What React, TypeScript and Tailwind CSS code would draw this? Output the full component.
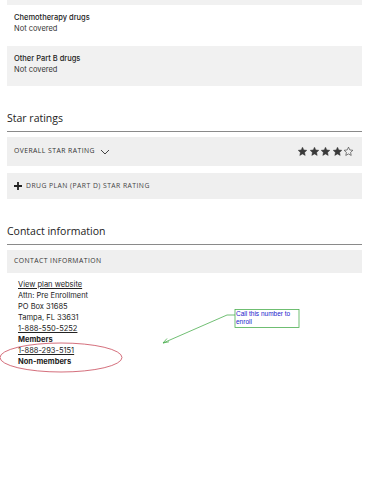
import React from 'react';

const heading = { fontFamily: '"Open Sans", "Liberation Sans", sans-serif' };
const body = { fontFamily: 'Inter, "Liberation Sans", sans-serif' };

function Star({ filled }: { filled: boolean }) {
    return (
        <svg width="11" height="11" viewBox="0 0 24 24">
            <path
                d="M12 2.5l2.9 6.1 6.6.8-4.9 4.6 1.3 6.6L12 17.3l-5.9 3.3 1.3-6.6-4.9-4.6 6.6-.8z"
                fill={filled ? '#3a3a3a' : 'none'}
                stroke="#3a3a3a"
                strokeWidth={filled ? 1 : 1.4}
                strokeLinejoin="round"
            />
        </svg>
    );
}

function Coverage({ title, gray }: { title: string; gray?: boolean }) {
    return (
        <div className={`px-[7px] pt-[7px] pb-[11px] ${gray ? 'bg-[#f1f1f1]' : ''}`} style={body}>
            <p className="text-[7.5px] font-medium text-[#222] leading-[11px]">{title}</p>
            <p className="text-[7.5px] text-[#333] leading-[11px]">Not covered</p>
        </div>
    );
}

export default function App() {
    return (
        <div className="relative w-[370px] h-[480px] bg-white overflow-hidden">
            <div className="pl-[7px] pr-[8px]">
                <div className="h-[5px] bg-[#f1f1f1]" />
                <Coverage title="Chemotherapy drugs" />
                <div className="mt-[1px]">
                    <Coverage title="Other Part B drugs" gray />
                </div>

                <h2 className="mt-[25px] text-[10.5px] text-[#222] leading-[14px] pb-[6px] border-b border-[#8a8a8a]" style={heading}>
                    Star ratings
                </h2>
                <div className="mt-[5px] h-[29px] bg-[#efefef] flex items-center justify-between px-[7px]" style={heading}>
                    <div className="flex items-center gap-[5px]">
                        <span className="text-[6.8px] tracking-[0.45px] text-[#333]">OVERALL STAR RATING</span>
                        <svg width="10" height="6" viewBox="0 0 10 6">
                            <path d="M1 1l4 4 4-4" fill="none" stroke="#444" strokeWidth="1" />
                        </svg>
                    </div>
                    <div className="flex items-center gap-[0.5px] pr-[1px]">
                        <Star filled />
                        <Star filled />
                        <Star filled />
                        <Star filled />
                        <Star filled={false} />
                    </div>
                </div>
                <div className="mt-[7px] h-[26px] bg-[#efefef] flex items-center gap-[4px] px-[7px]" style={heading}>
                    <svg width="8" height="8" viewBox="0 0 8 8">
                        <path d="M4 0v8M0 4h8" stroke="#222" strokeWidth="1.8" />
                    </svg>
                    <span className="text-[6.8px] tracking-[0.45px] text-[#444]">DRUG PLAN (PART D) STAR RATING</span>
                </div>

                <h2 className="mt-[25px] text-[10.5px] text-[#222] leading-[14px] pb-[6px] border-b border-[#8a8a8a]" style={heading}>
                    Contact information
                </h2>
                <div className="mt-[5px] h-[23px] bg-[#efefef] flex items-center px-[7px]" style={heading}>
                    <span className="text-[6.8px] tracking-[0.45px] text-[#333]">CONTACT INFORMATION</span>
                </div>
                <div className="mt-[6px] pl-[11px] text-[7.5px] leading-[11px] text-[#222]" style={body}>
                    <p className="underline">View plan website</p>
                    <p>Attn: Pre Enrollment</p>
                    <p>PO Box 31685</p>
                    <p>Tampa, FL 33631</p>
                    <p className="underline">1-888-550-5252</p>
                    <p className="font-bold">Members</p>
                    <p className="underline">1-888-293-5151</p>
                    <p className="font-bold">Non-members</p>
                </div>
            </div>

            <svg className="absolute left-0 top-0 pointer-events-none" width="370" height="480">
                <ellipse cx="61" cy="357.5" rx="61" ry="14.5" fill="none" stroke="#c94a5a" strokeWidth="0.8" />
                <path d="M235 315l-8 0-64 28" fill="none" stroke="#4caf50" strokeWidth="0.8" />
                <path d="M163 343l6-1.2M163 343l4-4.5" fill="none" stroke="#4caf50" strokeWidth="0.8" />
                <rect x="235" y="309.5" width="64" height="18" fill="white" stroke="#4caf50" strokeWidth="0.8" />
            </svg>
            <div className="absolute left-[236px] top-[310px] w-[63px] text-[6.5px] leading-[8px] text-[#1a1acc]" style={{ fontFamily: '"Liberation Sans", sans-serif' }}>
                Call this number to enroll
            </div>
        </div>
    );
}
